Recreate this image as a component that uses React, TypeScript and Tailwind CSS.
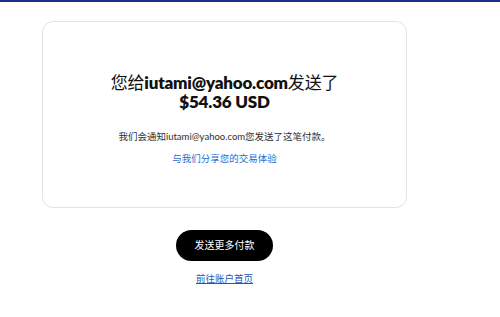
const font = {
  fontFamily: 'Lato, "Noto Sans CJK SC", sans-serif',
};

const SentCard = () => {
  return (
    <div className="w-[365px] rounded-[11px] border border-[#e3e3e3] bg-white pt-[51px] pb-[42px] px-4 text-center">
      <h1 className="text-[17px] leading-[19px] text-[#111] tracking-[-0.2px]">
        您给<span className="font-extrabold">iutami@yahoo.com</span>发送了
        <br />
        <span className="font-extrabold">$54.36 USD</span>
      </h1>
      <p className="mt-[19px] text-[9.5px] leading-[13px] text-[#2c2e2f]">
        我们会通知iutami@yahoo.com您发送了这笔付款。
      </p>
      <a className="mt-[9px] block text-[9.5px] leading-[13px] text-[#1a6dd3]">
        与我们分享您的交易体验
      </a>
    </div>
  );
};

export default function App() {
  return (
    <div className="min-h-[317px] bg-white" style={font}>
      <div className="h-[2px] bg-[#1f2d8a]" />
      <div className="flex flex-col items-center w-[365px] ml-[42px] pt-[19px]">
        <SentCard />
        <button className="mt-[22px] h-[31px] w-[97px] rounded-full bg-black text-[10px] text-white">
          发送更多付款
        </button>
        <a className="mt-[11px] text-[9.5px] leading-[13px] text-[#1a5ab8] underline">
          前往账户首页
        </a>
      </div>
    </div>
  );
}
